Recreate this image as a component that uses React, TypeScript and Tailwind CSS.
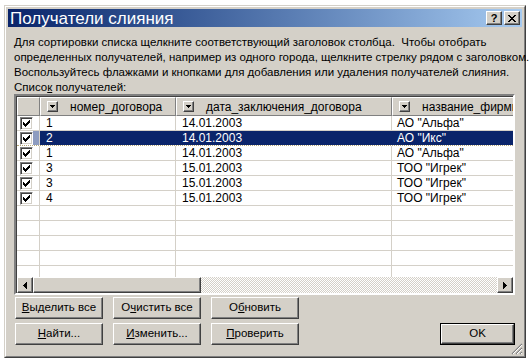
const RAISED =
  'border border-t-white border-l-white border-r-[#404040] border-b-[#404040] shadow-[inset_-1px_-1px_0_#808080]';

const ROWS = [
  { n: '1', date: '14.01.2003', firm: 'АО "Альфа"' },
  { n: '2', date: '14.01.2003', firm: 'АО "Икс"', selected: true },
  { n: '1', date: '14.01.2003', firm: 'АО "Альфа"' },
  { n: '3', date: '15.01.2003', firm: 'ТОО "Игрек"' },
  { n: '3', date: '15.01.2003', firm: 'ТОО "Игрек"' },
  { n: '4', date: '15.01.2003', firm: 'ТОО "Игрек"' },
];

const EMPTY_ROWS = 5;

function Check() {
  return (
    <div className="w-[13px] h-[13px] bg-white border border-t-[#808080] border-l-[#808080] border-r-white border-b-white shadow-[inset_1px_1px_0_#404040,inset_-1px_-1px_0_#d4d0c8] flex items-center justify-center">
      <svg width="7" height="7" viewBox="0 0 7 7" shapeRendering="crispEdges">
        <path d="M0 2h1v3h-1zM1 3h1v3h-1zM2 4h1v3h-1zM3 3h1v3h-1zM4 2h1v3h-1zM5 1h1v3h-1zM6 0h1v3h-1z" fill="#000" />
      </svg>
    </div>
  );
}

function DropBox() {
  return (
    <div className={`w-[11px] h-[11px] bg-[#d4d0c8] flex items-center justify-center shrink-0 ${RAISED}`}>
      <svg width="5" height="3" viewBox="0 0 5 3" shapeRendering="crispEdges">
        <path d="M0 0h5v1h-5zM1 1h3v1h-3zM2 2h1v1h-1z" fill="#000" />
      </svg>
    </div>
  );
}

function HeaderCell({ label, width }: { label: string; width: string }) {
  return (
    <div className={`${width} h-full shrink-0 flex items-center pl-[6px] border-t border-l border-t-white border-l-white border-r border-b border-r-[#808080] border-b-[#808080] overflow-hidden`}>
      <DropBox />
      <span className="ml-[12px] whitespace-nowrap text-[12px] text-black">{label}</span>
    </div>
  );
}

function Btn({ children, wide = 'w-[88px]' }: { children: React.ReactNode; wide?: string }) {
  return (
    <button className={`${wide} h-[22px] bg-[#d4d0c8] text-[11.5px] text-black flex items-center justify-center ${RAISED}`}>
      {children}
    </button>
  );
}

function ScrollArrow({ dir }: { dir: 'left' | 'right' }) {
  return (
    <div className={`w-[16px] h-full bg-[#d4d0c8] flex items-center justify-center shrink-0 ${RAISED}`}>
      <svg width="4" height="7" viewBox="0 0 4 7" shapeRendering="crispEdges">
        {dir === 'left' ? (
          <path d="M3 0h1v7h-1zM2 1h1v5h-1zM1 2h1v3h-1zM0 3h1v1h-1z" fill="#000" />
        ) : (
          <path d="M0 0h1v7h-1zM1 1h1v5h-1zM2 2h1v3h-1zM3 3h1v1h-1z" fill="#000" />
        )}
      </svg>
    </div>
  );
}

export default function App() {
  return (
    <div className="w-[531px] h-[363px] bg-white pt-[5px] pl-[4px] font-['Liberation_Sans',Arial,sans-serif] overflow-hidden">
      <div className="relative w-[522px] h-[353px] bg-[#d4d0c8] border border-t-[#d4d0c8] border-l-[#d4d0c8] border-r-[#404040] border-b-[#404040]">
        <div className="h-full border border-t-white border-l-white border-r-[#808080] border-b-[#808080] p-[2px] flex flex-col">
          {/* Title bar */}
          <div className="h-[18px] shrink-0 bg-gradient-to-r from-[#0a246a] to-[#a6caf0] flex items-center pl-[2px] pr-[2px]">
            <span className="text-white text-[17px] leading-none whitespace-nowrap">Получатели слияния</span>
            <div className="ml-auto flex gap-[2px]">
              <div className={`w-[16px] h-[14px] bg-[#d4d0c8] flex items-center justify-center text-[11px] font-bold leading-none text-black ${RAISED}`}>
                ?
              </div>
              <div className={`w-[16px] h-[14px] bg-[#d4d0c8] flex items-center justify-center ${RAISED}`}>
                <svg width="8" height="7" viewBox="0 0 8 7" shapeRendering="crispEdges">
                  <path d="M0 0h2v1h-2zM6 0h2v1h-2zM1 1h2v1h-2zM5 1h2v1h-2zM2 2h4v1h-4zM3 3h2v1h-2zM2 4h4v1h-4zM1 5h2v1h-2zM5 5h2v1h-2zM0 6h2v1h-2zM6 6h2v1h-2z" fill="#000" />
                </svg>
              </div>
            </div>
          </div>

          {/* Body */}
          <div className="flex-1 flex flex-col pl-[6px] pt-[8px] text-black">
            <div className="text-[11.5px] leading-[15px] whitespace-pre">
              <div>Для сортировки списка щелкните соответствующий заголовок столбца.  Чтобы отобрать</div>
              <div>определенных получателей, например из одного города, щелкните стрелку рядом с заголовком.</div>
              <div>Воспользуйтесь флажками и кнопками для добавления или удаления получателей слияния.</div>
              <div className="leading-[14px]">
                Списо<span className="underline">к</span> получателей:
              </div>
            </div>

            {/* Grid */}
            <div className="w-[501px] h-[201px] border-2 border-t-[#808080] border-l-[#808080] border-r-white border-b-white shadow-[inset_1px_1px_0_#404040] bg-white flex flex-col overflow-hidden">
              <div className="h-[19px] shrink-0 flex bg-[#d4d0c8] mt-[1px] ml-[1px]">
                <div className="w-[23px] h-full shrink-0 border-t border-l border-t-white border-l-white border-r border-b border-r-[#808080] border-b-[#808080]" />
                <HeaderCell label="номер_договора" width="w-[136px]" />
                <HeaderCell label="дата_заключения_договора" width="w-[216px]" />
                <HeaderCell label="название_фирмы" width="w-[160px]" />
              </div>
              <div className="flex-1 overflow-hidden ml-[1px]">
                {ROWS.map((r, i) => (
                  <div
                    key={i}
                    className={`h-[15px] flex text-[12px] leading-[14px] border-b ${
                      r.selected ? 'border-b-[#b8a878] border-dotted' : 'border-b-[#d4d0c8]'
                    }`}
                  >
                    <div className="w-[23px] shrink-0 flex items-center border-r border-r-[#d4d0c8] bg-white">
                      <div className="ml-[3px]">
                        <Check />
                      </div>
                      {r.selected && <div className="ml-auto w-[9px] h-full bg-[#8d9cc0]" />}
                    </div>
                    <div className={`w-[136px] shrink-0 pl-[6px] border-r ${r.selected ? 'bg-[#0a246a] text-white border-r-[#0a246a]' : 'border-r-[#d4d0c8]'}`}>
                      {r.n}
                    </div>
                    <div className={`w-[216px] shrink-0 pl-[6px] border-r ${r.selected ? 'bg-[#0a246a] text-white border-r-[#0a246a]' : 'border-r-[#d4d0c8]'}`}>
                      {r.date}
                    </div>
                    <div className={`w-[160px] shrink-0 pl-[5px] whitespace-nowrap ${r.selected ? 'bg-[#0a246a] text-white' : ''}`}>
                      {r.firm}
                    </div>
                  </div>
                ))}
                {Array.from({ length: EMPTY_ROWS }).map((_, i) => (
                  <div key={`e${i}`} className="h-[15px] flex border-b border-b-[#d4d0c8]">
                    <div className="w-[23px] shrink-0 border-r border-r-[#d4d0c8]" />
                    <div className="w-[136px] shrink-0 border-r border-r-[#d4d0c8]" />
                    <div className="w-[216px] shrink-0 border-r border-r-[#d4d0c8]" />
                    <div className="w-[160px] shrink-0" />
                  </div>
                ))}
              </div>
              {/* Horizontal scrollbar */}
              <div className="h-[16px] shrink-0 flex ml-[1px]">
                <ScrollArrow dir="left" />
                <div className={`w-[168px] h-full bg-[#d4d0c8] shrink-0 ${RAISED}`} />
                <div className="flex-1 h-full bg-[repeating-conic-gradient(#d4d0c8_0%_25%,#ffffff_0%_50%)] bg-[length:2px_2px]" />
                <ScrollArrow dir="right" />
              </div>
            </div>

            {/* Buttons */}
            <div className="mt-[2px] flex flex-col gap-[4px] pl-[1px]">
              <div className="flex gap-[10px]">
                <Btn>
                  <span className="underline">В</span>ыделить все
                </Btn>
                <Btn>
                  О<span className="underline">ч</span>истить все
                </Btn>
                <Btn>
                  О<span className="underline">б</span>новить
                </Btn>
              </div>
              <div className="flex gap-[10px] pr-[7px]">
                <Btn>
                  <span className="underline">Н</span>айти...
                </Btn>
                <Btn>
                  <span className="underline">И</span>зменить...
                </Btn>
                <Btn>
                  <span className="underline">П</span>роверить
                </Btn>
                <div className="ml-auto w-[75px] h-[22px] border border-black">
                  <button className={`w-full h-full bg-[#d4d0c8] text-[11.5px] text-black flex items-center justify-center ${RAISED}`}>
                    OK
                  </button>
                </div>
              </div>
            </div>
          </div>
        </div>

        {/* Size grip */}
        <svg className="absolute right-[2px] bottom-[2px]" width="12" height="12" viewBox="0 0 12 12">
          <path d="M11 1L1 11M11 5L5 11M11 9L9 11" stroke="#808080" strokeWidth="1.2" />
          <path d="M11 2L2 11M11 6L6 11M11 10L10 11" stroke="#ffffff" strokeWidth="1" />
        </svg>
      </div>
    </div>
  );
}
